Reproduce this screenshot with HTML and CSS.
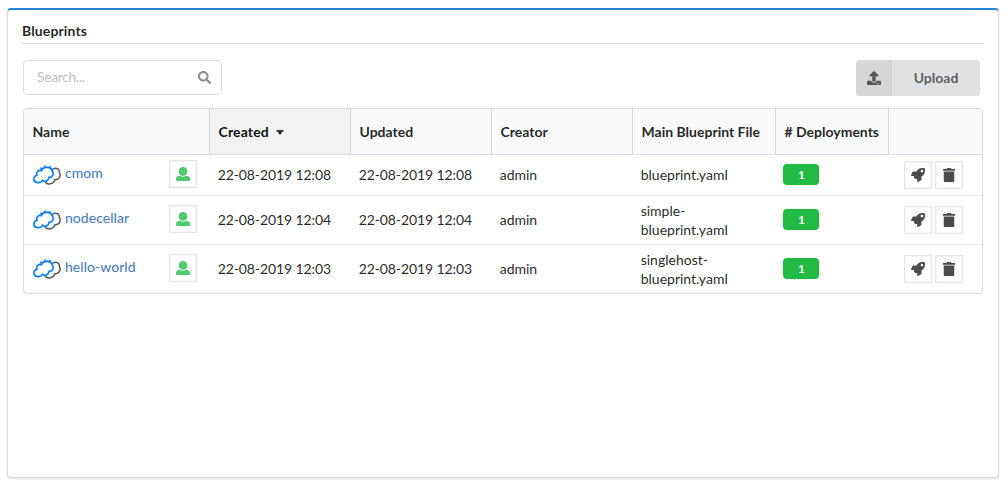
FILE: index.html
```html
<!DOCTYPE html>
<html lang="en">
<head>
<meta charset="utf-8">
<title>Blueprints</title>
<link rel="stylesheet" href="styles.css">
</head>
<body>
<svg class="sprite" aria-hidden="true">
  <symbol id="search" viewBox="0 0 512 512"><path d="M505 442.7L405.3 343c-4.5-4.5-10.6-7-17-7H372c27.6-35.3 44-79.7 44-128C416 93.1 322.9 0 208 0S0 93.1 0 208s93.1 208 208 208c48.3 0 92.7-16.4 128-44v16.3c0 6.4 2.5 12.5 7 17l99.7 99.7c9.4 9.4 24.6 9.4 33.9 0l28.3-28.3c9.4-9.4 9.4-24.6.1-34zM208 336c-70.7 0-128-57.2-128-128 0-70.7 57.2-128 128-128 70.7 0 128 57.2 128 128 0 70.7-57.2 128-128 128z"/></symbol>
  <symbol id="upload" viewBox="0 0 512 512"><path d="M296 384h-80c-13.3 0-24-10.7-24-24V192h-87.7c-17.8 0-26.7-21.5-14.1-34.1L242.3 5.7c7.5-7.5 19.8-7.5 27.3 0l152.2 152.2c12.6 12.6 3.7 34.1-14.1 34.1H320v168c0 13.3-10.7 24-24 24zm216-8v112c0 13.3-10.7 24-24 24H24c-13.3 0-24-10.7-24-24V376c0-13.3 10.7-24 24-24h136v8c0 30.9 25.1 56 56 56h80c30.9 0 56-25.1 56-56v-8h136c13.3 0 24 10.7 24 24zm-124 88c0-11-9-20-20-20s-20 9-20 20 9 20 20 20 20-9 20-20zm64 0c0-11-9-20-20-20s-20 9-20 20 9 20 20 20 20-9 20-20z"/></symbol>
  <symbol id="user" viewBox="0 0 512 512"><path d="M256 0c88.366 0 160 71.634 160 160s-71.634 160-160 160S96 248.366 96 160 167.634 0 256 0zm183.283 333.821l-71.313-17.828c-74.923 53.89-165.738 41.864-223.94 0l-71.313 17.828C29.981 344.505 0 382.903 0 426.955V464c0 26.51 21.49 48 48 48h416c26.51 0 48-21.49 48-48v-37.045c0-44.052-29.981-82.45-72.717-93.134z"/></symbol>
  <symbol id="rocket" viewBox="0 0 512 512"><path d="M505.1 19.1C503.8 13 499 8.2 492.9 6.9 460.7 0 435.5 0 410.4 0 307.2 0 245.3 55.2 199.1 128H94.9c-18.2 0-34.8 10.3-42.9 26.5L2.6 253.3c-8 16 3.6 34.7 21.5 34.7h95.1c-5.9 12.8-11.9 25.5-18 37.7-3.1 6.2-1.9 13.6 3 18.5l63.6 63.6c4.9 4.9 12.3 6.1 18.5 3 12.2-6.1 24.9-12 37.7-17.9V488c0 17.8 18.8 29.4 34.7 21.5l98.7-49.4c16.3-8.1 26.5-24.8 26.5-42.9V312.8c72.6-46.3 128-108.4 128-211.1.1-25.2.1-50.4-6.8-82.6zM400 160c-26.5 0-48-21.5-48-48s21.5-48 48-48 48 21.5 48 48-21.5 48-48 48z"/></symbol>
  <symbol id="trash" viewBox="0 0 448 512"><path d="M0 84V56c0-13.3 10.7-24 24-24h112l9.4-18.7c4-8.2 12.3-13.3 21.4-13.3h114.3c9.1 0 17.4 5.1 21.5 13.3L312 32h112c13.3 0 24 10.7 24 24v28c0 6.6-5.4 12-12 12H12C5.4 96 0 90.6 0 84zm416 56v324c0 26.5-21.5 48-48 48H80c-26.5 0-48-21.5-48-48V140c0-6.6 5.4-12 12-12h360c6.6 0 12 5.4 12 12z"/></symbol>
  <symbol id="clouds" viewBox="0 0 28 20">
    <path d="M20.300 3.700C24 2.300 26.800 4.600 26.300 7.300C28.300 10.500 26.500 14.800 22 14.700C21 19.200 14.500 20.300 12 17" fill="none" stroke="#55585c" stroke-width="1.500"/>
    <path d="M5 17.600C0 17.800-.5 11.300 4 10.300C2.600 6.800 6 4.600 8.600 5.700C9.400 1.200 18.500 1.200 19.200 6C21.500 9 19.500 12.800 16 12.300C15.500 16.500 11 17.300 9.500 15.300C8.500 17 7 17.700 5 17.600Z" fill="none" stroke="#0b7fff" stroke-width="1.600"/>
    <path d="M7.600 4.700L7.500 2.600L9.400 3.300ZM10.700 2.500L12.200.2L13.300 2.400ZM15.300 2.300L17.400.9L17.500 3.100ZM18.600 4L20.600 3.700L19.800 5.900Z" fill="#0b7fff" stroke="#0b7fff" stroke-width=".5"/>
  </symbol>
</svg>
<main class="widget">
  <h1 class="title">Blueprints</h1>
  <div class="toolbar">
    <label class="search"><input type="text" placeholder="Search..."><svg><use href="#search"/></svg></label>
    <button class="upload"><span class="upload-icon"><svg><use href="#upload"/></svg></span><span class="upload-text">Upload</span></button>
  </div>
  <table class="table">
    <colgroup><col class="c-name"><col class="c-std"><col class="c-std"><col class="c-std"><col class="c-file"><col class="c-dep"><col class="c-act"></colgroup>
    <thead><tr><th>Name</th><th class="sorted">Created<i class="caret"></i></th><th>Updated</th><th>Creator</th><th>Main Blueprint File</th><th># Deployments</th><th></th></tr></thead>
    <tbody>
      <tr>
        <td><div class="name"><svg class="logo"><use href="#clouds"/></svg><a>cmom</a><span class="box user"><svg><use href="#user"/></svg></span></div></td>
        <td class="text date">22-08-2019 12:08</td><td class="text date">22-08-2019 12:08</td><td class="text">admin</td><td class="text">blueprint.yaml</td>
        <td><div class="badge">1</div></td>
        <td><div class="actions"><span class="box"><svg><use href="#rocket"/></svg></span><span class="box"><svg><use href="#trash"/></svg></span></div></td>
      </tr>
      <tr>
        <td><div class="name"><svg class="logo"><use href="#clouds"/></svg><a>nodecellar</a><span class="box user"><svg><use href="#user"/></svg></span></div></td>
        <td class="text date">22-08-2019 12:04</td><td class="text date">22-08-2019 12:04</td><td class="text">admin</td><td class="text wrapped">simple-<br>blueprint.yaml</td>
        <td><div class="badge">1</div></td>
        <td><div class="actions"><span class="box"><svg><use href="#rocket"/></svg></span><span class="box"><svg><use href="#trash"/></svg></span></div></td>
      </tr>
      <tr>
        <td><div class="name"><svg class="logo"><use href="#clouds"/></svg><a>hello-world</a><span class="box user"><svg><use href="#user"/></svg></span></div></td>
        <td class="text date">22-08-2019 12:03</td><td class="text date">22-08-2019 12:03</td><td class="text">admin</td><td class="text wrapped">singlehost-<br>blueprint.yaml</td>
        <td><div class="badge">1</div></td>
        <td><div class="actions"><span class="box"><svg><use href="#rocket"/></svg></span><span class="box"><svg><use href="#trash"/></svg></span></div></td>
      </tr>
    </tbody>
  </table>
</main>
</body>
</html>
```
FILE: styles.css
```css
* { box-sizing: border-box; }
body {
  margin: 0;
  padding: 8px 9px 0 7px;
  height: 488px;
  overflow: hidden;
  background: #fff;
  color: rgba(0, 0, 0, .87);
  font: 14px/19px Lato, "Liberation Sans", sans-serif;
}
svg { display: block; fill: currentColor; }
.sprite { position: absolute; width: 0; height: 0; }
.widget {
  height: 470px;
  padding: 13px 14px 0 14px;
  border: 1px solid #d9dadb;
  border-top: 2px solid #2185d0;
  border-radius: 4px;
  background: #fff;
  box-shadow: 0 1px 2px rgba(34, 36, 38, .15);
}
.title {
  margin: 0;
  height: 21px;
  padding-bottom: 1px;
  border-bottom: 1px solid #dcdddd;
  font-size: 14px;
  line-height: 16px;
  font-weight: 700;
  letter-spacing: .12px;
}
.toolbar {
  display: flex;
  justify-content: space-between;
  align-items: flex-start;
  height: 64px;
  padding: 16px 4px 0 1px;
}
.search {
  display: flex;
  align-items: center;
  width: 199px;
  height: 35px;
  padding: 0 10px 0 13px;
  border: 1px solid #dededf;
  border-radius: 4px;
}
.search input {
  flex: 1;
  min-width: 0;
  padding: 0 0 2px;
  border: 0;
  outline: 0;
  background: none;
  font: inherit;
  letter-spacing: -.4px;
}
.search input::placeholder { color: #bfbfbf; }
.search svg { width: 13px; height: 13px; color: #8c8c8c; }
.upload {
  display: flex;
  width: 124px;
  height: 36px;
  padding: 0;
  border: 0;
  border-radius: 4px;
  overflow: hidden;
  background: #e0e1e2;
  color: rgba(0, 0, 0, .6);
  font: 700 14px/36px Lato, "Liberation Sans", sans-serif;
}
.upload-icon {
  display: grid;
  place-items: center;
  width: 36px;
  height: 36px;
  background: #d5d6d7;
}
.upload-icon svg { width: 14px; height: 14px; }
.upload-text { flex: 1; }
.table {
  width: 960px;
  height: 186px;
  margin-left: 1px;
  border: 1px solid #d9dadb;
  border-radius: 4px;
  border-spacing: 0;
  table-layout: fixed;
  overflow: hidden;
}
.c-name { width: 185px; }
.c-std { width: 141px; }
.c-file { width: 143px; }
.c-dep { width: 113px; }
.c-act { width: 94px; }
th {
  height: 46px;
  padding: 0 0 0 8.5px;
  border-left: 1px solid #d5d6d7;
  border-bottom: 1px solid #dededf;
  background: #f9fafb;
  text-align: left;
  white-space: nowrap;
}
th:first-child { border-left: 0; }
th.sorted { background: #f2f2f2; color: rgba(0, 0, 0, .95); letter-spacing: .15px; }
.caret {
  display: inline-block;
  margin-left: 7.5px;
  vertical-align: 2px;
  border: 4.5px solid transparent;
  border-top: 5px solid #333;
  border-bottom: 0;
}
td { height: 49px; padding: 0 0 0 9px; border-top: 1px solid #e7e7e8; }
td.text { padding: 0 0 2px 8.7px; }
td.date { letter-spacing: -.1px; }
td.wrapped { padding-bottom: 0; }
tbody tr:first-child td { height: 40px; border-top: 0; }
.name { display: flex; align-items: center; height: 28px; padding-right: 12px; margin-bottom: 2px; }
.logo { width: 28px; height: 20px; margin: 2px 4px 0 0; }
.name a { margin-bottom: 4px; color: #4078bd; letter-spacing: .05px; }
.name .box { margin-left: auto; }
.box {
  display: grid;
  place-items: center;
  width: 28px;
  height: 28px;
  border: 1px solid #e6e6e7;
  box-shadow: inset 0 0 0 1px #f6f6f6;
  color: #4b4b4b;
}
.box svg { width: 14px; height: 14px; }
.user { color: #4dca6b; }
.badge {
  width: 36px;
  height: 21px;
  margin: 0 0 1px -1px;
  padding-left: 1px;
  border-radius: 4px;
  background: #21ba45;
  color: #fff;
  font-size: 12px;
  font-weight: 700;
  line-height: 21px;
  text-align: center;
}
.actions { display: flex; gap: 3px; padding-left: 7px; }
```
